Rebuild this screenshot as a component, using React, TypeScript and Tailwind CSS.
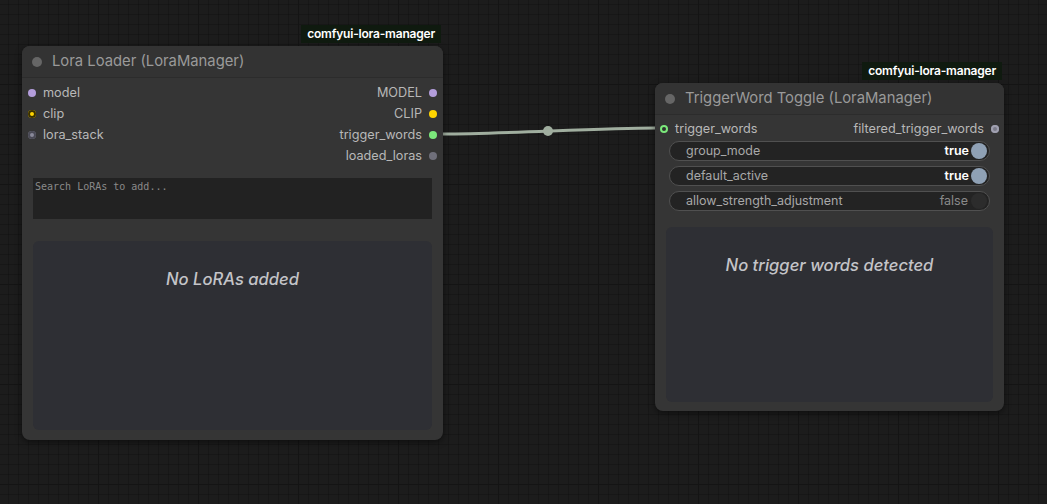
import React from 'react';

const FONT = { fontFamily: 'Inter, "Noto Sans", sans-serif' };

function Dot({ color, ring }: { color: string; ring?: string }) {
  return (
    <span
      className="inline-block w-[8px] h-[8px] rounded-full shrink-0"
      style={{ background: color, boxShadow: ring ? `inset 0 0 0 2px ${ring}` : undefined }}
    />
  );
}

function Badge({ children }: { children: React.ReactNode }) {
  return (
    <div className="absolute right-[2px] -top-[21px] h-[18px] px-[6px] flex items-center bg-[#0f1a0f] text-white text-[12px] font-semibold tracking-[-0.2px]">
      {children}
    </div>
  );
}

function Title({ text }: { text: string }) {
  return (
    <div className="h-[32px] flex items-center gap-[10px] px-[10px] bg-[#333333] rounded-t-[8px] border-b border-[#2c2c2c]">
      <span className="w-[10px] h-[10px] rounded-full bg-[#666]" />
      <span className="text-[14.8px] text-[#9a9a9a]">{text}</span>
    </div>
  );
}

function Toggle({ label, on }: { label: string; on: boolean }) {
  return (
    <div className="h-[20px] rounded-full bg-[#232323] border border-[#505050] flex items-center pl-[16px] pr-[2px]">
      <span className="flex-1 text-[12.5px] text-[#a8a8a8]">{label}</span>
      <span className={on ? 'text-[12.5px] font-semibold text-white mr-[2px]' : 'text-[12.5px] text-[#8a8a8a] mr-[3px]'}>
        {on ? 'true' : 'false'}
      </span>
      <span className={on ? 'w-[16px] h-[16px] rounded-full bg-[#8fa1b5]' : 'w-[16px] h-[16px] rounded-full bg-[#2c2c2c]'} />
    </div>
  );
}

export default function App() {
  return (
    <div
      className="relative w-[1047px] h-[504px] overflow-hidden bg-[#1c1c1c] bg-[linear-gradient(#141414_1px,transparent_1px),linear-gradient(90deg,#141414_1px,transparent_1px),linear-gradient(rgba(0,0,0,0.18)_1px,transparent_1px),linear-gradient(90deg,rgba(0,0,0,0.18)_1px,transparent_1px)] bg-[size:100px_100px,100px_100px,10px_10px,10px_10px] bg-[position:-2px_-16px]"
      style={FONT}
    >
      {/* link */}
      <svg className="absolute inset-0" width="1047" height="504">
        <path d="M443 134 C 500 134, 600 128, 655 128" stroke="#a0ae9f" strokeWidth="3" fill="none" />
        <circle cx="548" cy="131" r="5" fill="#a0ae9f" />
      </svg>

      {/* Lora Loader */}
      <div className="absolute left-[22px] top-[46px] w-[421px] h-[394px] rounded-[8px] bg-[#353535] shadow-[0_2px_6px_rgba(0,0,0,0.5)] flex flex-col">
        <Badge>comfyui-lora-manager</Badge>
        <Title text="Lora Loader (LoraManager)" />
        <div className="flex justify-between pt-[4px] px-[6px] text-[12.7px] text-[#b8b8b8]">
          <div className="flex flex-col">
            <div className="h-[21px] flex items-center gap-[7px]"><Dot color="#b39ddb" /><span>model</span></div>
            <div className="h-[21px] flex items-center gap-[7px]"><Dot color="#ffd500" ring="#3a3000" /><span>clip</span></div>
            <div className="h-[21px] flex items-center gap-[7px]"><Dot color="#8a8a9a" ring="#4a4a55" /><span>lora_stack</span></div>
          </div>
          <div className="flex flex-col items-end">
            <div className="h-[21px] flex items-center gap-[7px]"><span>MODEL</span><Dot color="#b39ddb" /></div>
            <div className="h-[21px] flex items-center gap-[7px]"><span>CLIP</span><Dot color="#ffd500" /></div>
            <div className="h-[21px] flex items-center gap-[7px]"><span>trigger_words</span><Dot color="#7be87b" /></div>
            <div className="h-[21px] flex items-center gap-[7px]"><span>loaded_loras</span><Dot color="#6f6f7a" /></div>
          </div>
        </div>
        <div className="mx-[11px] mt-[12px] h-[41px] bg-[#222222] px-[2px] pt-[1px] text-[10px] text-[#8a8a8a]" style={{ fontFamily: '"DejaVu Sans Mono", monospace' }}>
          Search LoRAs to add...
        </div>
        <div className="mx-[11px] mt-[22px] mb-[10px] flex-1 rounded-[6px] bg-[#2e2f34] flex justify-center pt-[26px]">
          <span className="italic font-medium text-[16.6px] text-[#c4c4c8]">No LoRAs added</span>
        </div>
      </div>

      {/* TriggerWord Toggle */}
      <div className="absolute left-[655px] top-[83px] w-[349px] h-[328px] rounded-[8px] bg-[#353535] shadow-[0_2px_6px_rgba(0,0,0,0.5)] flex flex-col">
        <Badge>comfyui-lora-manager</Badge>
        <Title text="TriggerWord Toggle (LoraManager)" />
        <div className="flex justify-between items-center h-[22px] mt-[3px] pl-[5px] pr-[5px] text-[12.7px] text-[#b8b8b8]">
          <div className="flex items-center gap-[7px]"><Dot color="#2f2f2f" ring="#7be87b" /><span>trigger_words</span></div>
          <div className="flex items-center gap-[7px]"><span>filtered_trigger_words</span><Dot color="#7a7a88" ring="#a0a0b0" /></div>
        </div>
        <div className="mx-[14px] mt-[1px] flex flex-col gap-[5px]">
          <Toggle label="group_mode" on />
          <Toggle label="default_active" on />
          <Toggle label="allow_strength_adjustment" on={false} />
        </div>
        <div className="mx-[11px] mt-[16px] mb-[9px] flex-1 rounded-[6px] bg-[#2e2f34] flex justify-center pt-[26px]">
          <span className="italic font-medium text-[16.6px] text-[#c4c4c8]">No trigger words detected</span>
        </div>
      </div>
    </div>
  );
}
